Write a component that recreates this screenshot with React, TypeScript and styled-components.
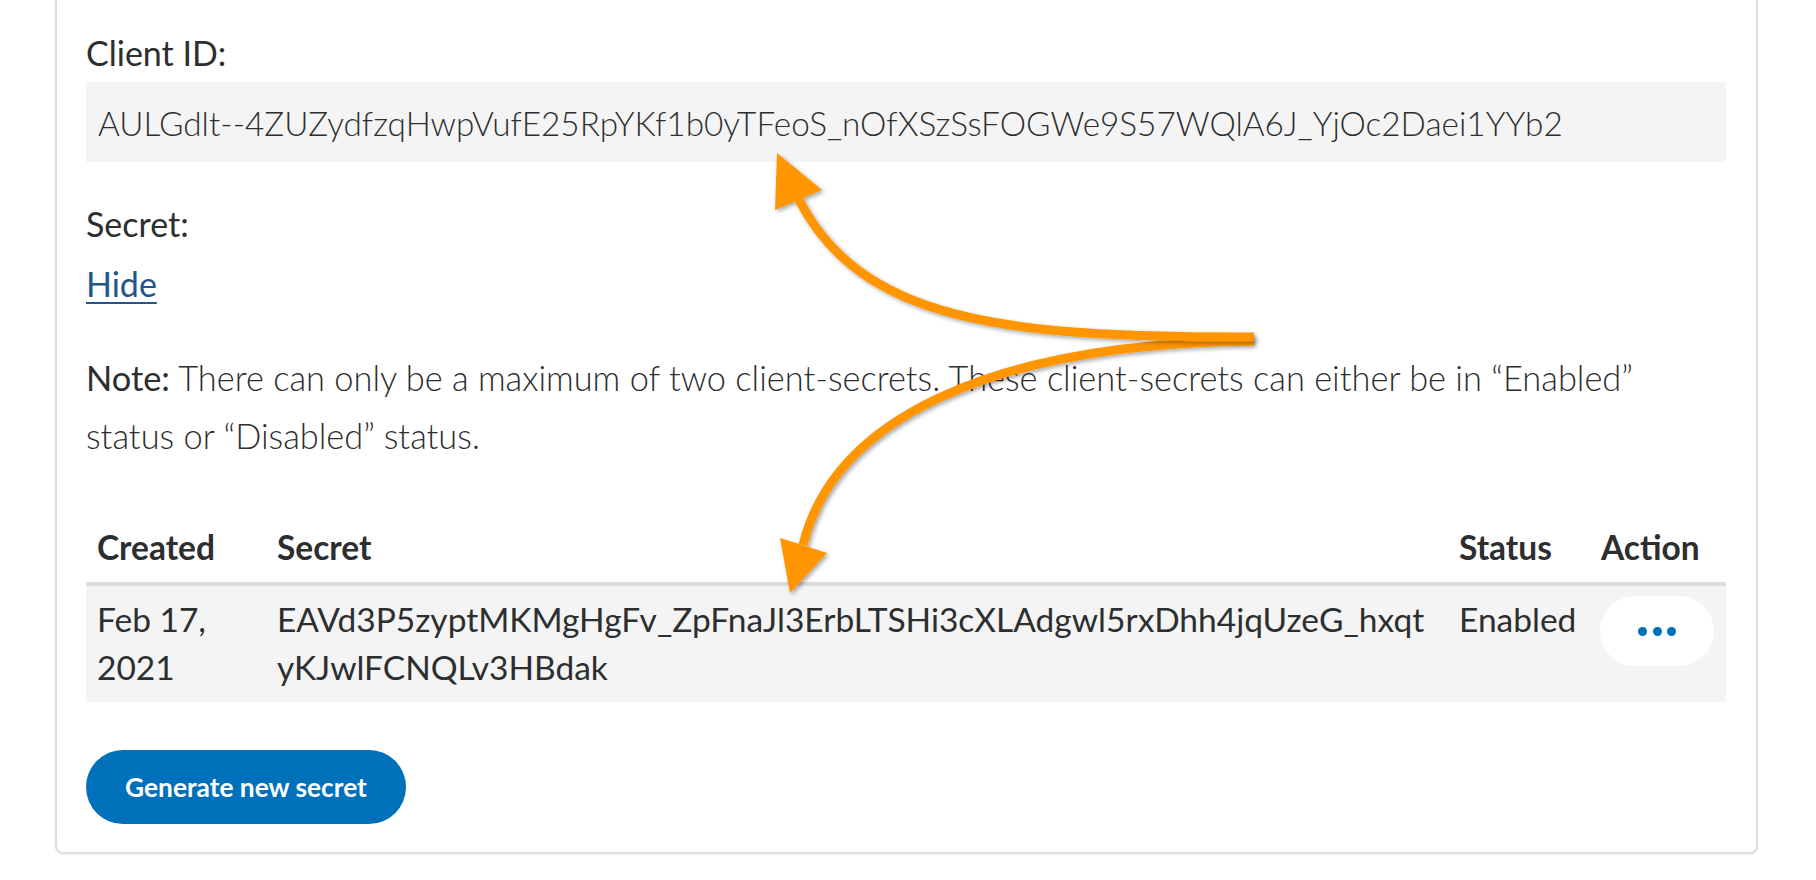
import styled, { createGlobalStyle } from 'styled-components';

const GlobalStyle = createGlobalStyle`
  html, body {
    margin: 0;
    padding: 0;
    background: #fff;
    overflow: hidden;
  }
  body {
    font-family: Lato, "Liberation Sans", Arial, sans-serif;
    color: #2c2e2f;
  }
`

const Page = styled.div`
  position: relative;
  height: 880px;
  padding: 0 58px 0 55px;
  box-sizing: border-box;
`

const Card = styled.div`
  border: 2px solid #dedede;
  border-top: none;
  border-radius: 0 0 8px 8px;
  box-shadow: 0 1px 2px rgba(0, 0, 0, 0.06);
  padding: 29px 30px 28px 29px;
`

const Label = styled.p<{ $gap?: number }>`
  margin: ${p => p.$gap || 0}px 0 0;
  font-size: 34px;
  line-height: 48px;
  font-weight: 400;
`

const IdBox = styled.div`
  margin-top: 5px;
  background: #f4f4f4;
  padding: 17px 12px 15px;
  font-size: 33.3px;
  line-height: 48px;
  font-weight: 300;
  white-space: nowrap;
`

const HideLink = styled.a`
  display: inline-block;
  margin-top: 12px;
  font-size: 34px;
  line-height: 48px;
  color: #23548a;
  text-decoration: underline;
  text-underline-offset: 5px;
  text-decoration-thickness: 2px;
`

const Note = styled.p`
  margin: 41px 0 0;
  max-width: 1590px;
  font-size: 34.4px;
  line-height: 58px;
  font-weight: 300;

  strong {
    font-weight: 400;
  }
`

const Table = styled.table`
  width: 100%;
  margin-top: 48px;
  border-collapse: collapse;
  table-layout: fixed;
`

const Th = styled.th`
  text-align: left;
  font-size: 33.5px;
  line-height: 48px;
  font-weight: 700;
  padding: 10px 10px 11px 11px;
  border-bottom: 4px solid #dcdcdc;
`

const Td = styled.td`
  vertical-align: top;
  background: #f4f4f4;
  font-size: 33.5px;
  line-height: 48px;
  font-weight: 400;
  padding: 9px 10px 11px 11px;
`

const SecretCell = styled(Td)`
  word-break: break-all;
`

const MoreButton = styled.button`
  display: flex;
  align-items: center;
  justify-content: center;
  gap: 5.5px;
  width: 114px;
  height: 70px;
  margin: 1px 0 0 -1px;
  border: none;
  border-radius: 35px;
  background: #fff;
  padding: 0;
`

const Dot = styled.span`
  width: 9px;
  height: 9px;
  border-radius: 50%;
  background: #0070ba;
`

const PrimaryButton = styled.button`
  display: block;
  margin-top: 48px;
  width: 320px;
  height: 74px;
  border: none;
  border-radius: 37px;
  background: #0070ba;
  color: #fff;
  font-family: inherit;
  font-size: 26.3px;
  font-weight: 700;
  padding: 0;
`

const Overlay = styled.svg`
  position: absolute;
  top: 0;
  left: 0;
  pointer-events: none;
`

const secrets = [
  {
    created: 'Feb 17, 2021',
    secret: 'EAVd3P5zyptMKMgHgFv_ZpFnaJl3ErbLTSHi3cXLAdgwl5rxDhh4jqUzeG_hxqtyKJwlFCNQLv3HBdak',
    status: 'Enabled'
  }
]

const Arrows = () => (
  <Overlay width="1816" height="880" viewBox="0 0 1816 880">
    <defs>
      <filter id="shade" x="-10%" y="-10%" width="130%" height="130%">
        <feDropShadow dx="2" dy="2" stdDeviation="2" floodColor="#000" floodOpacity="0.35" />
      </filter>
    </defs>
    <g filter="url(#shade)" fill="none" stroke="#ff9500" strokeWidth="9">
      <path d="M1254 341 C 1000 343, 835 415, 803 545" />
      <polygon points="780,538 827,553 790,593" fill="#ff9500" stroke="none" />
    </g>
    <g filter="url(#shade)" fill="none" stroke="#ff9500" strokeWidth="9">
      <path d="M1254 337 C 1000 338, 860 320, 798 198" />
      <polygon points="777,153 822,190 775,210" fill="#ff9500" stroke="none" />
    </g>
  </Overlay>
)

const App = () => {
  return (
    <>
      <GlobalStyle />
      <Page>
        <Card>
          <Label>Client ID:</Label>
          <IdBox>AULGdlt--4ZUZydfzqHwpVufE25RpYKf1b0yTFeoS_nOfXSzSsFOGWe9S57WQlA6J_YjOc2Daei1YYb2</IdBox>
          <Label $gap={38}>Secret:</Label>
          <HideLink href="#">Hide</HideLink>
          <Note>
            <strong>Note:</strong> There can only be a maximum of two client-secrets. These client-secrets can either be in “Enabled” status or “Disabled” status.
          </Note>
          <Table>
            <colgroup>
              <col style={{ width: 180 }} />
              <col />
              <col style={{ width: 142 }} />
              <col style={{ width: 136 }} />
            </colgroup>
            <thead>
              <tr>
                <Th>Created</Th>
                <Th>Secret</Th>
                <Th>Status</Th>
                <Th>Action</Th>
              </tr>
            </thead>
            <tbody>
              {secrets.map(item => (
                <tr key={item.secret}>
                  <Td>{item.created}</Td>
                  <SecretCell>{item.secret}</SecretCell>
                  <Td>{item.status}</Td>
                  <Td>
                    <MoreButton aria-label="More actions">
                      <Dot />
                      <Dot />
                      <Dot />
                    </MoreButton>
                  </Td>
                </tr>
              ))}
            </tbody>
          </Table>
          <PrimaryButton>Generate new secret</PrimaryButton>
        </Card>
        <Arrows />
      </Page>
    </>
  );
}

export default App;
